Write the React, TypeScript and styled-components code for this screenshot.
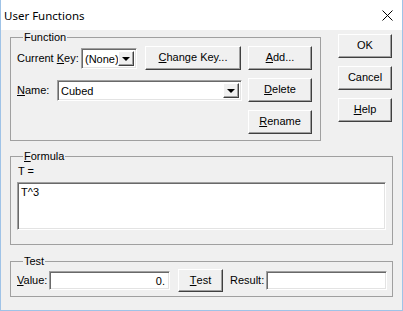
import * as React from 'react';
import styled, { createGlobalStyle } from 'styled-components';

const GlobalStyle = createGlobalStyle`
  html, body {
    margin: 0;
    padding: 0;
    background: #ffffff;
  }

  * {
    box-sizing: border-box;
  }
`;

const Key: React.FC<{ children: React.ReactNode }> = ({ children }) => <u>{children}</u>;

const App: React.FC = () => {
  return (
    <>
      <GlobalStyle />
      <Window>
        <TitleBar>
          <Title>User Functions</Title>
          <CloseIcon width="11" height="11" viewBox="0 0 11 11">
            <path d="M0.5 0.5 L10.5 10.5 M10.5 0.5 L0.5 10.5" stroke="#000" strokeWidth="1" />
          </CloseIcon>
        </TitleBar>
        <Body>
          <TopRow>
            <FunctionGroup>
              <Legend>Function</Legend>
              <Row>
                <Label $width={64}>Current <Key>K</Key>ey:</Label>
                <Combo $width={56}>
                  <ComboText>(None)</ComboText>
                  <DropButton>
                    <Arrow />
                  </DropButton>
                </Combo>
                <Button $width={96} $left={8}><Key>C</Key>hange Key...</Button>
                <Button $width={64} $left={7}><Key>A</Key>dd...</Button>
              </Row>
              <Row>
                <Label $width={40}><Key>N</Key>ame:</Label>
                <Combo $width={185}>
                  <ComboText>Cubed</ComboText>
                  <DropButton>
                    <Arrow />
                  </DropButton>
                </Combo>
                <Button $width={64} $left={6}><Key>D</Key>elete</Button>
              </Row>
              <Row>
                <Button $width={64} $left="auto"><Key>R</Key>ename</Button>
              </Row>
            </FunctionGroup>
            <SideColumn>
              <Button $width={54}>OK</Button>
              <Button $width={54}>Cancel</Button>
              <Button $width={54}><Key>H</Key>elp</Button>
            </SideColumn>
          </TopRow>

          <FormulaGroup>
            <Legend><Key>F</Key>ormula</Legend>
            <Caption>T =</Caption>
            <TextArea>T^3</TextArea>
          </FormulaGroup>

          <TestGroup>
            <Legend>Test</Legend>
            <TestRow>
              <Label $width={32}><Key>V</Key>alue:</Label>
              <Field $width={121} $align="right">0.</Field>
              <Button $width={45} $height={23} $left={8}><Key>T</Key>est</Button>
              <Label $width={36} $left={7}>Result:</Label>
              <Field $width={121} />
            </TestRow>
          </TestGroup>
        </Body>
      </Window>
    </>
  );
};

export default App;

const uiFont = `'Liberation Sans', Arial, sans-serif`;

const Window = styled.div`
  width: 403px;
  height: 311px;
  display: flex;
  flex-direction: column;
  background: #f0f0f0;
  border: 1px solid #9fc3e7;
  border-top: none;
  font-family: ${uiFont};
  font-size: 11px;
  color: #000;
`;

const TitleBar = styled.div`
  height: 30px;
  flex: none;
  display: flex;
  align-items: center;
  justify-content: space-between;
  padding: 0 9px 0 3px;
  background: #ffffff;
`;

const Title = styled.span`
  font-family: 'Noto Sans', 'Open Sans', sans-serif;
  font-size: 11.5px;
  line-height: 16px;
  margin-top: 1px;
`;

const CloseIcon = styled.svg`
  display: block;
  margin-top: 1px;
`;

const Body = styled.div`
  padding: 1px 9px 0 9px;
`;

const TopRow = styled.div`
  display: flex;
  align-items: flex-start;
`;

const Group = styled.fieldset`
  margin: 0;
  min-width: 0;
  border: 1px solid #a0a0a0;
`;

const Legend = styled.legend`
  margin-left: 6px;
  padding: 0 1px;
  font-size: 11px;
  line-height: 13px;
`;

const FunctionGroup = styled(Group)`
  width: 311px;
  padding: 2px 8px 6px 6px;
  display: flex;
  flex-direction: column;
  gap: 8px;
`;

const FormulaGroup = styled(Group)`
  margin-top: 9px;
  padding: 2px 6px 14px 6px;
`;

const TestGroup = styled(Group)`
  margin-top: 10px;
  padding: 1px 6px 4px 6px;
`;

const Row = styled.div`
  height: 24px;
  display: flex;
  align-items: center;
`;

const TestRow = styled.div`
  height: 23px;
  display: flex;
  align-items: center;
`;

const SideColumn = styled.div`
  margin: 3px 0 0 17px;
  display: flex;
  flex-direction: column;
  gap: 8px;
`;

const Label = styled.span<{ $width: number; $left?: number }>`
  flex: none;
  width: ${(p) => p.$width}px;
  margin-left: ${(p) => p.$left ?? 0}px;
  white-space: nowrap;
  line-height: 13px;
`;

const Caption = styled.div`
  line-height: 13px;
  padding-left: 1px;
`;

const Button = styled.div<{ $width: number; $height?: number; $left?: number | 'auto' }>`
  flex: none;
  width: ${(p) => p.$width}px;
  height: ${(p) => p.$height ?? 24}px;
  margin-left: ${(p) => (p.$left === 'auto' ? 'auto' : `${p.$left ?? 0}px`)};
  display: flex;
  align-items: center;
  justify-content: center;
  background: #f0f0f0;
  border: 1px solid;
  border-color: #ffffff #404040 #404040 #ffffff;
  box-shadow: inset -1px -1px #a0a0a0;
  line-height: 13px;
  white-space: nowrap;
  padding-bottom: 1px;
`;

const sunken = `
  background: #ffffff;
  border: 1px solid;
  border-color: #a0a0a0 #ffffff #ffffff #a0a0a0;
  box-shadow: inset 1px 1px #696969, inset -1px -1px #e3e3e3;
`;

const Combo = styled.div<{ $width: number }>`
  flex: none;
  width: ${(p) => p.$width}px;
  height: 21px;
  display: flex;
  align-items: stretch;
  padding: 2px;
  ${sunken}
`;

const ComboText = styled.span`
  flex: 1;
  padding-left: 1px;
  line-height: 16px;
  white-space: nowrap;
  overflow: hidden;
`;

const DropButton = styled.div`
  flex: none;
  width: 16px;
  display: flex;
  align-items: center;
  justify-content: center;
  background: #f0f0f0;
  border: 1px solid;
  border-color: #ffffff #404040 #404040 #ffffff;
  box-shadow: inset -1px -1px #a0a0a0;
`;

const Arrow = styled.span`
  width: 0;
  height: 0;
  border-left: 4px solid transparent;
  border-right: 4px solid transparent;
  border-top: 4px solid #000;
  margin-top: 1px;
`;

const Field = styled.div<{ $width: number; $align?: 'left' | 'right' }>`
  flex: none;
  width: ${(p) => p.$width}px;
  height: 19px;
  padding: 2px 4px;
  line-height: 14px;
  text-align: ${(p) => p.$align ?? 'left'};
  ${sunken}
`;

const TextArea = styled.div`
  margin-top: 4px;
  height: 48px;
  padding: 2px 3px;
  line-height: 14px;
  ${sunken}
`;
